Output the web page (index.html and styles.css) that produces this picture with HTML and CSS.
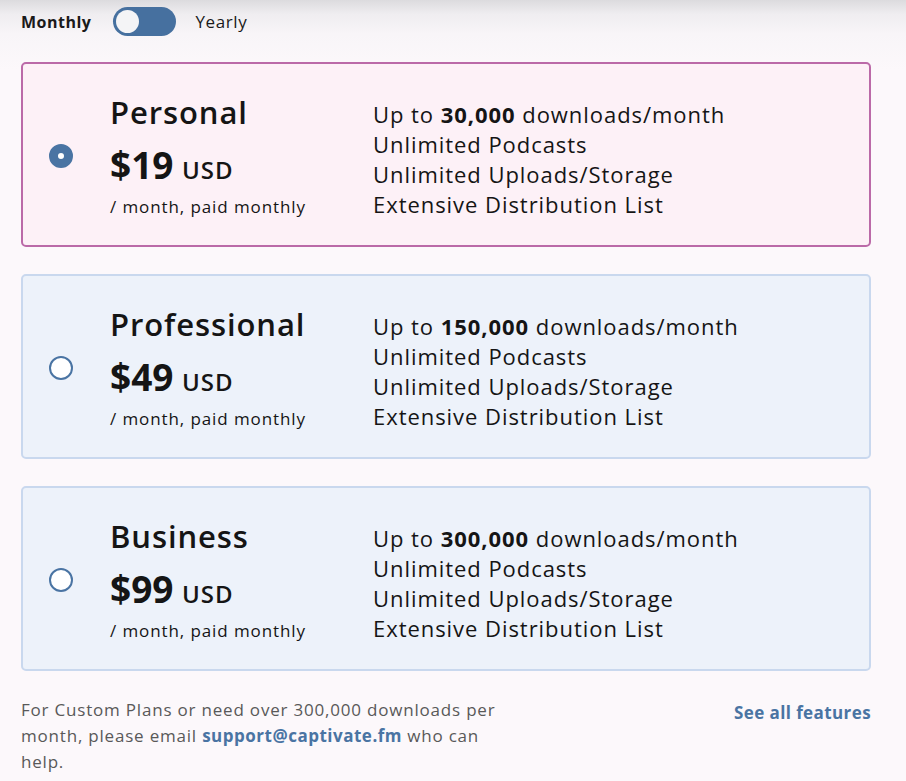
FILE: index.html
```html
<!DOCTYPE html>
<html lang="en">
<head>
<meta charset="utf-8">
<title>Plans</title>
<link rel="stylesheet" href="styles.css">
</head>
<body>
<div class="page">
  <div class="billing">
    <span class="billing-label billing-label--active">Monthly</span>
    <span class="switch"><span class="switch-knob"></span></span>
    <span class="billing-label">Yearly</span>
  </div>

  <div class="plans">
    <div class="plan plan--selected">
      <span class="radio radio--on"></span>
      <div class="plan-info">
        <div class="plan-name">Personal</div>
        <div class="plan-price">$19 <span class="plan-cur">USD</span></div>
        <div class="plan-period">/ month, paid monthly</div>
      </div>
      <ul class="plan-features">
        <li>Up to <b>30,000</b> downloads/month</li>
        <li>Unlimited Podcasts</li>
        <li>Unlimited Uploads/Storage</li>
        <li>Extensive Distribution List</li>
      </ul>
    </div>

    <div class="plan">
      <span class="radio"></span>
      <div class="plan-info">
        <div class="plan-name">Professional</div>
        <div class="plan-price">$49 <span class="plan-cur">USD</span></div>
        <div class="plan-period">/ month, paid monthly</div>
      </div>
      <ul class="plan-features">
        <li>Up to <b>150,000</b> downloads/month</li>
        <li>Unlimited Podcasts</li>
        <li>Unlimited Uploads/Storage</li>
        <li>Extensive Distribution List</li>
      </ul>
    </div>

    <div class="plan">
      <span class="radio"></span>
      <div class="plan-info">
        <div class="plan-name">Business</div>
        <div class="plan-price">$99 <span class="plan-cur">USD</span></div>
        <div class="plan-period">/ month, paid monthly</div>
      </div>
      <ul class="plan-features">
        <li>Up to <b>300,000</b> downloads/month</li>
        <li>Unlimited Podcasts</li>
        <li>Unlimited Uploads/Storage</li>
        <li>Extensive Distribution List</li>
      </ul>
    </div>
  </div>

  <div class="footer">
    <p class="footer-note">For Custom Plans or need over 300,000 downloads per month, please email <a class="footer-mail" href="#">support@captivate.fm</a> who can help.</p>
    <a class="footer-link" href="#">See all features</a>
  </div>
</div>
</body>
</html>
```

FILE: styles.css
```css
html, body {
  margin: 0;
  padding: 0;
}

body {
  font-family: "Open Sans", "Noto Sans", sans-serif;
  color: #151515;
  background: linear-gradient(to bottom, #dcdbde 0, #efedf0 14px, #f8f5f8 34px, #fcf8fb 70px);
  min-height: 781px;
}

.page {
  width: 850px;
  margin-left: 21px;
  padding-top: 7px;
}

.billing {
  display: flex;
  align-items: center;
  height: 29px;
}

.billing-label {
  font-size: 17px;
  font-weight: 400;
  color: #1a1a1a;
  letter-spacing: 0.6px;
}

.billing-label--active {
  font-size: 16px;
  font-weight: 700;
  letter-spacing: 0.5px;
  margin-right: 22px;
}

.switch {
  width: 63px;
  height: 29px;
  border-radius: 15px;
  background: #46709f;
  display: flex;
  align-items: center;
  padding: 0 3px;
  box-sizing: border-box;
  margin-right: 19px;
}

.switch-knob {
  width: 23px;
  height: 23px;
  border-radius: 50%;
  background: #f4f4f6;
}

.plans {
  margin-top: 26px;
  display: flex;
  flex-direction: column;
  gap: 27px;
}

.plan {
  box-sizing: border-box;
  height: 185px;
  display: flex;
  align-items: center;
  padding: 0 25px;
  border: 2px solid #c9d8ee;
  border-radius: 5px;
  background: #edf2fa;
}

.plan--selected {
  border-color: #bb6aa8;
  background: #fdf1f7;
}

.radio {
  flex: none;
  width: 24px;
  height: 24px;
  box-sizing: border-box;
  border-radius: 50%;
  border: 2px solid #4a74a3;
  background: #ffffff;
  margin-top: 2px;
  margin-left: 1px;
}

.radio--on {
  border: 9px solid #4a74a3;
}

.plan-info {
  width: 263px;
  margin-left: 37px;
  margin-top: 4px;
  flex: none;
}

.plan-name {
  font-size: 31px;
  font-weight: 600;
  line-height: 36px;
  letter-spacing: 0.9px;
}

.plan-price {
  font-size: 37px;
  font-weight: 700;
  line-height: 50px;
  margin-top: 10px;
}

.plan-cur {
  font-size: 24px;
  font-weight: 600;
  letter-spacing: 0.9px;
  margin-left: -1px;
}

.plan-period {
  font-size: 17px;
  line-height: 24px;
  letter-spacing: 0.9px;
  margin-top: 0;
}

.plan-features {
  list-style: none;
  margin: 8px 0 0;
  padding: 0;
  font-size: 22px;
  line-height: 30px;
  letter-spacing: 0.95px;
}

.plan-features b {
  font-weight: 700;
}

.footer {
  display: flex;
  justify-content: space-between;
  align-items: flex-start;
  margin-top: 26px;
}

.footer-note {
  margin: 0;
  width: 490px;
  font-size: 17px;
  line-height: 26px;
  letter-spacing: 0.8px;
  color: #595959;
}

.footer-mail {
  color: #4a74a3;
  font-weight: 700;
  letter-spacing: 0.5px;
  text-decoration: none;
}

.footer-link {
  color: #4a74a3;
  font-weight: 700;
  font-size: 17px;
  line-height: 26px;
  letter-spacing: 0.4px;
  text-decoration: none;
  margin-top: 3px;
}
```
